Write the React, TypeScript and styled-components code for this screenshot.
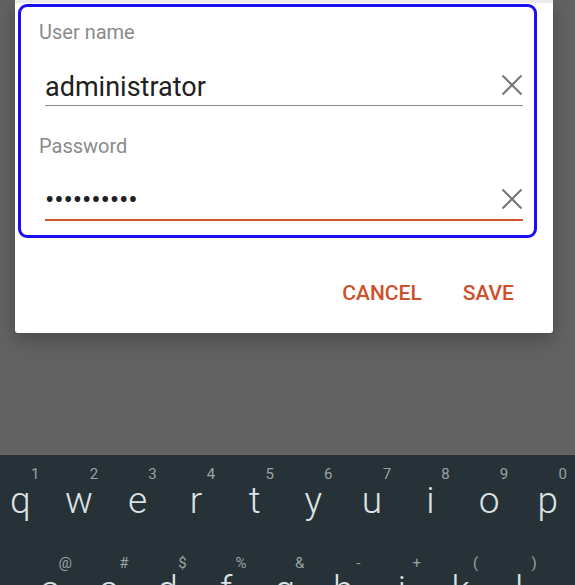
import * as React from 'react';
import styled, { createGlobalStyle } from 'styled-components';

const GlobalStyle = createGlobalStyle`
  html, body {
    margin: 0;
    padding: 0;
    background: #626262;
  }
  body {
    font-family: Roboto, "Noto Sans", "Liberation Sans", sans-serif;
  }
`;

const topRow = [
  ['q', '1'], ['w', '2'], ['e', '3'], ['r', '4'], ['t', '5'],
  ['y', '6'], ['u', '7'], ['i', '8'], ['o', '9'], ['p', '0'],
];

const homeRow = [
  ['a', '@'], ['s', '#'], ['d', '$'], ['f', '%'], ['g', '&'],
  ['h', '-'], ['j', '+'], ['k', '('], ['l', ')'],
];

const ClearIcon: React.FC = () => (
  <Field.Clear viewBox="0 0 22 22" aria-hidden>
    <path d="M1.5 1.5 L20.5 20.5 M20.5 1.5 L1.5 20.5" />
  </Field.Clear>
);

const App: React.FC = () => (
  <>
    <GlobalStyle />
    <Screen>
      <Dialog.Box>
        <Dialog.Focus>
          <Field.Label>User name</Field.Label>
          <Field.Row>
            <Field.Value>administrator</Field.Value>
            <ClearIcon />
          </Field.Row>
          <Field.Label $gap={28}>Password</Field.Label>
          <Field.Row $focused>
            <Field.Dots>••••••••••</Field.Dots>
            <ClearIcon />
          </Field.Row>
        </Dialog.Focus>
        <Dialog.Actions>
          <Dialog.Button>Cancel</Dialog.Button>
          <Dialog.Button>Save</Dialog.Button>
        </Dialog.Actions>
      </Dialog.Box>
      <Keyboard.Panel>
        <Keyboard.Row $offset={-9}>
          {topRow.map(([letter, hint]) => (
            <Keyboard.Key key={letter}>
              <Keyboard.Hint>{hint}</Keyboard.Hint>
              <Keyboard.Letter>{letter}</Keyboard.Letter>
            </Keyboard.Key>
          ))}
        </Keyboard.Row>
        <Keyboard.Row $offset={21}>
          {homeRow.map(([letter, hint]) => (
            <Keyboard.Key key={letter}>
              <Keyboard.Hint>{hint}</Keyboard.Hint>
              <Keyboard.Letter>{letter}</Keyboard.Letter>
            </Keyboard.Key>
          ))}
        </Keyboard.Row>
      </Keyboard.Panel>
    </Screen>
  </>
);

export default App;

const Screen = styled.div`
  width: 575px;
  height: 585px;
  overflow: hidden;
  background: #626262;
  display: flex;
  flex-direction: column;
`;

const Dialog = {
  Box: styled.div`
    box-sizing: border-box;
    height: 333px;
    margin: 0 22px 0 15px;
    background: #fff;
    border-top: 3px solid #ebebeb;
    border-radius: 0 0 3px 3px;
    box-shadow: 0 6px 18px rgba(0, 0, 0, 0.28);
    display: flex;
    flex-direction: column;
  `,
  Focus: styled.div`
    margin: 1px 16px 0 3px;
    border: 3px solid #1a0ff2;
    border-radius: 9px;
    padding: 13px 11px 14px 18px;
  `,
  Actions: styled.div`
    margin-top: 43px;
    padding-right: 39px;
    display: flex;
    justify-content: flex-end;
    gap: 41px;
  `,
  Button: styled.div`
    font-size: 21px;
    line-height: 24px;
    font-weight: 500;
    text-transform: uppercase;
    color: #d04f2b;
  `,
};

const Field = {
  Label: styled.div<{ $gap?: number }>`
    margin-top: ${(p) => p.$gap ?? 0}px;
    font-size: 20px;
    line-height: 24px;
    color: #8a8a8a;
  `,
  Row: styled.div<{ $focused?: boolean }>`
    margin: 21px 0 0 6px;
    height: 40px;
    display: flex;
    align-items: center;
    border-bottom: ${(p) => (p.$focused ? '2px solid #d2532e' : '1px solid #8a8a8a')};
  `,
  Value: styled.div`
    flex: 1;
    padding-top: 3px;
    font-size: 27px;
    color: #212121;
  `,
  Dots: styled.div`
    flex: 1;
    font-size: 28px;
    letter-spacing: -0.2px;
    color: #212121;
  `,
  Clear: styled.svg`
    width: 22px;
    height: 22px;
    flex: none;
    fill: none;
    stroke: #757575;
    stroke-width: 2;
  `,
};

const Keyboard = {
  Panel: styled.div`
    margin-top: auto;
    height: 130px;
    flex: none;
    background: #263238;
    overflow: hidden;
  `,
  Row: styled.div<{ $offset: number }>`
    display: flex;
    margin-left: ${(p) => p.$offset}px;
  `,
  Key: styled.div`
    box-sizing: border-box;
    width: 58.6px;
    height: 89px;
    flex: none;
    padding-top: 10px;
    display: flex;
    flex-direction: column;
  `,
  Hint: styled.div`
    margin-left: 30px;
    text-align: center;
    font-size: 15px;
    line-height: 18px;
    color: #98a2a7;
  `,
  Letter: styled.div`
    text-align: center;
    font-size: 37px;
    line-height: 36px;
    font-weight: 300;
    color: #dde2e4;
  `,
};
